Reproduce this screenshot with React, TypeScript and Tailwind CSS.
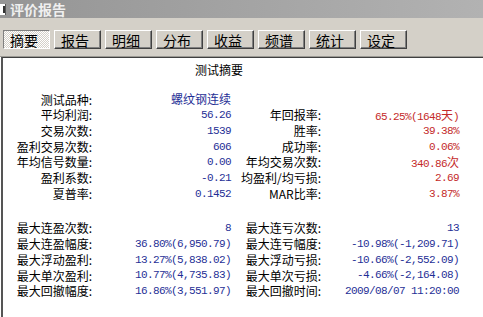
import React from "react";

type Row = { label: string; value: string; tone?: "blue" | "red" };

const tabs = ["摘要", "报告", "明细", "分布", "收益", "频谱", "统计", "设定"];

const top: [Row, Row | null][] = [
  [{ label: "测试品种:", value: "螺纹钢连续" }, null],
  [{ label: "平均利润:", value: "56.26" }, { label: "年回报率:", value: "65.25%(1648天)", tone: "red" }],
  [{ label: "交易次数:", value: "1539" }, { label: "胜率:", value: "39.38%", tone: "red" }],
  [{ label: "盈利交易次数:", value: "606" }, { label: "成功率:", value: "0.06%", tone: "red" }],
  [{ label: "年均信号数量:", value: "0.00" }, { label: "年均交易次数:", value: "340.86次", tone: "red" }],
  [{ label: "盈利系数:", value: "-0.21" }, { label: "均盈利/均亏损:", value: "2.69", tone: "red" }],
  [{ label: "夏普率:", value: "0.1452" }, { label: "MAR比率:", value: "3.87%", tone: "red" }],
];

const bottom: [Row, Row][] = [
  [{ label: "最大连盈次数:", value: "8" }, { label: "最大连亏次数:", value: "13" }],
  [{ label: "最大连盈幅度:", value: "36.80%(6,950.79)" }, { label: "最大连亏幅度:", value: "-10.98%(-1,209.71)" }],
  [{ label: "最大浮动盈利:", value: "13.27%(5,838.02)" }, { label: "最大浮动亏损:", value: "-10.66%(-2,552.09)" }],
  [{ label: "最大单次盈利:", value: "10.77%(4,735.83)" }, { label: "最大单次亏损:", value: "-4.66%(-2,164.08)" }],
  [{ label: "最大回撤幅度:", value: "16.86%(3,551.97)" }, { label: "最大回撤时间:", value: "2009/08/07 11:20:00" }],
];

// ascii in a 6px-wide mono, CJK chars at full 12px
function Value({ text }: { text: string }) {
  const parts = text.split(/([\u4e00-\u9fff]+)/).filter(Boolean);
  return (
    <>
      {parts.map((p, i) =>
        /[\u4e00-\u9fff]/.test(p) ? (
          <span key={i} className="font-['Noto_Sans_CJK_SC',sans-serif] text-[12px] tracking-normal">
            {p}
          </span>
        ) : (
          <span key={i} className="whitespace-pre">{p}</span>
        )
      )}
    </>
  );
}

function Cells({ row, labelW, valueW }: { row: Row | null; labelW: string; valueW: string }) {
  const color = row?.tone === "red" ? "text-[#c42a2a]" : "text-[#1f2f96]";
  return (
    <>
      <div className={`${labelW} shrink-0 text-right text-[12px] text-black whitespace-nowrap`}>{row?.label}</div>
      <div
        className={`${valueW} shrink-0 text-right font-['Liberation_Mono',monospace] text-[11px] tracking-[-0.6px] whitespace-nowrap ${color}`}
      >
        {row && <Value text={row.value} />}
      </div>
    </>
  );
}

function StatRow({ left, right, h }: { left: Row; right: Row | null; h: string }) {
  return (
    <div className={`flex items-center ${h}`}>
      <Cells row={left} labelW="w-[89px]" valueW="w-[139px]" />
      <Cells row={right} labelW="w-[90px]" valueW="w-[138px]" />
    </div>
  );
}

export default function App() {
  return (
    <div className="w-[483px] h-[317px] flex flex-col bg-white overflow-hidden font-['Noto_Sans_CJK_SC',sans-serif]">
      {/* Title bar */}
      <div className="h-[18px] shrink-0 flex items-center bg-gradient-to-r from-[#959595] to-[#b2b2b2]">
        <div className="w-[6px] h-[11px] bg-white border-r border-[#555] flex items-center justify-end">
          <div className="w-[2px] h-[7px] bg-[#333]" />
        </div>
        <span className="ml-[4px] text-[14px] leading-none font-bold text-[#efefef]">评价报告</span>
      </div>

      {/* Tabs */}
      <div className="h-[39px] shrink-0 bg-[#d4d0c8] border-b border-[#9c9a94] flex gap-[4px] pl-[3px] pt-[12px]">
        {tabs.map((t, i) => (
          <div
            key={t}
            className={
              i === 0
                ? "w-[47px] h-[19px] flex items-center pl-[6px] text-[14px] leading-none text-black border border-t-[#808080] border-l-[#808080] border-r-white border-b-white bg-[repeating-conic-gradient(#ffffff_0_25%,#d4d0c8_0_50%)] bg-[length:2px_2px]"
                : "w-[47px] h-[19px] flex items-center pl-[6px] text-[14px] leading-none text-black bg-[#d4d0c8] border border-t-white border-l-white border-r-[#404040] border-b-[#404040] shadow-[inset_-1px_-1px_0_#808080]"
            }
          >
            {t}
          </div>
        ))}
      </div>

      {/* Summary panel */}
      <div className="flex-1 ml-px border-t border-l-2 border-t-[#404040] border-l-[#555] bg-white">
        <div className="pt-[4px] pl-[192px] h-[20px] text-[12px] leading-[16px] text-black">测试摘要</div>
        <div className="h-[14px]" />
        {top.map(([l, r], i) => (
          <StatRow key={i} left={l} right={r} h="h-[15.67px]" />
        ))}
        <div className="h-[19px]" />
        {bottom.map(([l, r], i) => (
          <StatRow key={i} left={l} right={r} h="h-[15.75px]" />
        ))}
      </div>
    </div>
  );
}
